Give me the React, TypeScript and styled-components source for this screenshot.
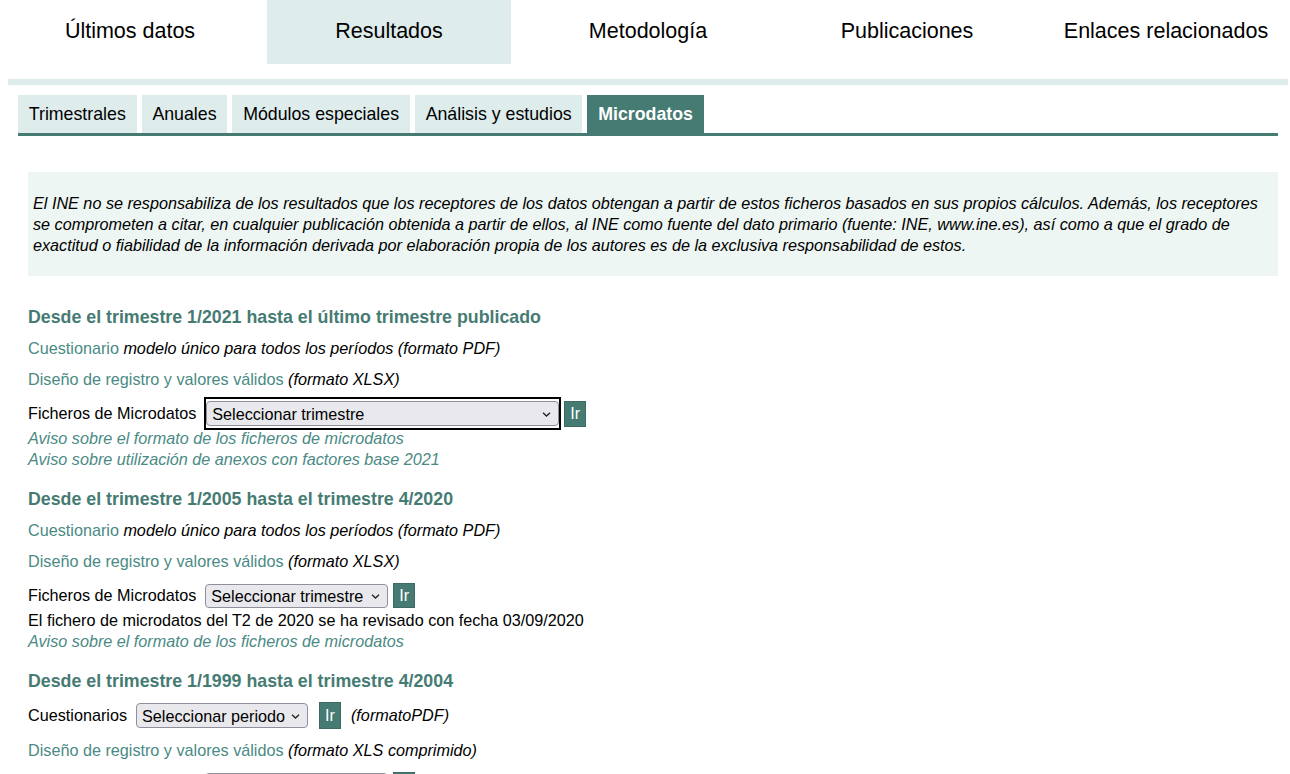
import React from 'react';
import styled, { createGlobalStyle } from 'styled-components';

const GlobalStyle = createGlobalStyle`
  html, body { margin: 0; padding: 0; background: #fff; }
  body { font-family: "Liberation Sans", Arial, sans-serif; color: #000; overflow: hidden; }
`;

const TEAL = '#467b73';
const LIGHT = '#deeceb';
const LINK = '#4a8a84';
const BODY = '16.2px';

const Page = styled.div`
  width: 1290px;
  overflow: hidden;
`;

const TopNav = styled.nav`
  display: grid;
  grid-template-columns: repeat(5, 259px);
  height: 64px;
`;

const TopItem = styled.a<{ $active?: boolean }>`
  margin: 0 7px 0 8px;
  background: ${p => (p.$active ? LIGHT : 'transparent')};
  display: flex;
  justify-content: center;
  padding-top: 19px;
  font-size: 21.5px;
  line-height: 24px;
  color: #000;
  text-decoration: none;
  white-space: nowrap;
`;

const LightBar = styled.div`
  margin: 15px 2px 0 8px;
  height: 6px;
  background: ${LIGHT};
`;

const SubTabs = styled.div`
  margin: 10px 12px 0 18px;
  display: flex;
  gap: 5px;
  border-bottom: 3px solid ${TEAL};
`;

const SubTab = styled.a<{ $active?: boolean }>`
  height: 38px;
  padding: 0 10.8px;
  font-size: 17.75px;
  line-height: 39px;
  background: ${p => (p.$active ? TEAL : LIGHT)};
  color: ${p => (p.$active ? '#fff' : '#000')};
  font-weight: ${p => (p.$active ? 'bold' : 'normal')};
  text-decoration: none;
  white-space: nowrap;
`;

const Content = styled.main`
  margin-top: 36px;
  padding: 0 12px 0 28px;
`;

const InfoBox = styled.div`
  background: #eef6f3;
  padding: 20.5px 5px;
  font-style: italic;
  font-size: ${BODY};
  line-height: 21px;
`;

const Heading = styled.h3<{ $first?: boolean }>`
  margin: ${p => (p.$first ? '30px' : '18px')} 0 0;
  font-size: 17.8px;
  line-height: 22px;
  font-weight: bold;
  color: ${TEAL};
`;

const Para = styled.p`
  margin: 10px 0 0;
  font-size: ${BODY};
  line-height: 21px;
`;

const Link = styled.a`
  color: ${LINK};
  text-decoration: none;
`;

const Em = styled.em`
  font-style: italic;
`;

const Row = styled.div`
  display: flex;
  align-items: center;
  height: 29px;
  margin-top: 9px;
  font-size: ${BODY};
`;

const Label = styled.span`
  white-space: nowrap;
`;

const Focus = styled.span<{ $focused?: boolean; $ml: number }>`
  display: inline-flex;
  margin-left: ${p => p.$ml}px;
  border: ${p => (p.$focused ? '2px solid #000' : '0')};
  padding: ${p => (p.$focused ? '2px 0' : '0')};
  position: relative;
`;

const Select = styled.select<{ $w: number; $h: number }>`
  appearance: none;
  -webkit-appearance: none;
  width: ${p => p.$w}px;
  height: ${p => p.$h}px;
  box-sizing: border-box;
  border: 1px solid #8f8f9d;
  border-radius: 4px;
  background: #e9e9ed;
  font-family: "Liberation Sans", Arial, sans-serif;
  font-size: ${BODY};
  color: #000;
  padding: 0 14px 0 5px;
  outline: none;
`;

const Chevron = styled.svg`
  position: absolute;
  right: 8px;
  top: 50%;
  margin-top: -2px;
  pointer-events: none;
`;

const GoButton = styled.button<{ $ml: number; $h: number }>`
  margin-left: ${p => p.$ml}px;
  width: 22px;
  height: ${p => p.$h}px;
  padding: 0;
  border: 1px solid #3d6b64;
  background: ${TEAL};
  color: #fff;
  font-family: "Liberation Sans", Arial, sans-serif;
  font-size: ${BODY};
  line-height: 1;
`;

const Notes = styled.div`
  font-size: ${BODY};
  line-height: 21px;
`;

const NoteLink = styled(Link)`
  display: block;
  font-style: italic;
`;

const NoteText = styled.div``;

const After = styled.em`
  margin-left: 10px;
  font-style: italic;
  white-space: nowrap;
`;

type PickerProps = { label: string; text: string; w: number; h: number; selMl: number; btnMl: number; btnH: number; focused?: boolean };

const Picker = ({ label, text, w, h, selMl, btnMl, btnH, focused }: PickerProps) => (
  <>
    <Label>{label}</Label>
    <Focus $focused={focused} $ml={selMl}>
      <Select $w={w} $h={h} defaultValue="x">
        <option value="x">{text}</option>
      </Select>
      <Chevron width="9" height="5" viewBox="0 0 9 5">
        <path d="M1 0.8 L4.5 4 L8 0.8" fill="none" stroke="#222" strokeWidth="1.3" />
      </Chevron>
    </Focus>
    <GoButton $ml={btnMl} $h={btnH}>Ir</GoButton>
  </>
);

const topItems = ['Últimos datos', 'Resultados', 'Metodología', 'Publicaciones', 'Enlaces relacionados'];
const subItems = ['Trimestrales', 'Anuales', 'Módulos especiales', 'Análisis y estudios', 'Microdatos'];

export default function App() {
  return (
    <Page>
      <GlobalStyle />
      <TopNav>
        {topItems.map(t => (
          <TopItem key={t} $active={t === 'Resultados'}>{t}</TopItem>
        ))}
      </TopNav>
      <LightBar />
      <SubTabs>
        {subItems.map(t => (
          <SubTab key={t} $active={t === 'Microdatos'}>{t}</SubTab>
        ))}
      </SubTabs>
      <Content>
        <InfoBox>
          El INE no se responsabiliza de los resultados que los receptores de los datos obtengan a partir de estos ficheros basados en sus propios cálculos. Además, los receptores se comprometen a citar, en cualquier publicación obtenida a partir de ellos, al INE como fuente del dato primario (fuente: INE, www.ine.es), así como a que el grado de exactitud o fiabilidad de la información derivada por elaboración propia de los autores es de la exclusiva responsabilidad de estos.
        </InfoBox>

        <Heading $first>Desde el trimestre 1/2021 hasta el último trimestre publicado</Heading>
        <Para><Link>Cuestionario</Link> <Em>modelo único para todos los períodos (formato PDF)</Em></Para>
        <Para><Link>Diseño de registro y valores válidos</Link> <Em>(formato XLSX)</Em></Para>
        <Row>
          <Picker label="Ficheros de Microdatos" text="Seleccionar trimestre" w={353} h={25} selMl={8} btnMl={3} btnH={26} focused />
        </Row>
        <Notes>
          <NoteLink>Aviso sobre el formato de los ficheros de microdatos</NoteLink>
          <NoteLink>Aviso sobre utilización de anexos con factores base 2021</NoteLink>
        </Notes>

        <Heading>Desde el trimestre 1/2005 hasta el trimestre 4/2020</Heading>
        <Para><Link>Cuestionario</Link> <Em>modelo único para todos los períodos (formato PDF)</Em></Para>
        <Para><Link>Diseño de registro y valores válidos</Link> <Em>(formato XLSX)</Em></Para>
        <Row>
          <Picker label="Ficheros de Microdatos" text="Seleccionar trimestre" w={183} h={24} selMl={9} btnMl={5} btnH={25} />
        </Row>
        <Notes>
          <NoteText>El fichero de microdatos del T2 de 2020 se ha revisado con fecha 03/09/2020</NoteText>
          <NoteLink>Aviso sobre el formato de los ficheros de microdatos</NoteLink>
        </Notes>

        <Heading>Desde el trimestre 1/1999 hasta el trimestre 4/2004</Heading>
        <Row>
          <Picker label="Cuestionarios" text="Seleccionar periodo" w={172} h={25} selMl={9} btnMl={11} btnH={27} />
          <After>(formatoPDF)</After>
        </Row>
        <Para><Link>Diseño de registro y valores válidos</Link> <Em>(formato XLS comprimido)</Em></Para>
        <Row>
          <Picker label="Ficheros de Microdatos" text="Seleccionar trimestre" w={183} h={24} selMl={9} btnMl={5} btnH={25} />
        </Row>
      </Content>
    </Page>
  );
}
